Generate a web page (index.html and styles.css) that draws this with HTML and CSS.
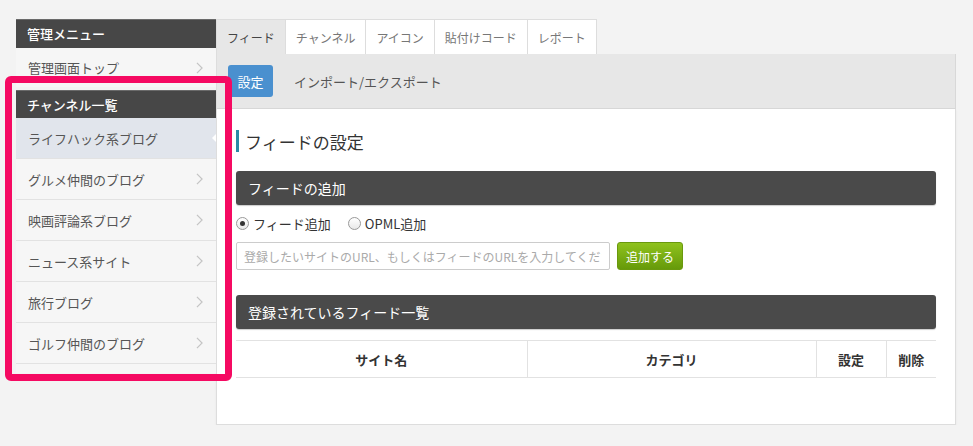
FILE: index.html
```html
<!DOCTYPE html>
<html lang="ja">
<head>
  <meta charset="UTF-8">
  <title>管理メニュー - フィードの設定</title>
  <link rel="stylesheet" href="styles.css">
</head>
<body>
  <div class="page">
    <aside class="sidebar">
      <div class="side-head">管理メニュー</div>
      <a href="#" class="side-item side-top">管理画面トップ
        <svg class="chev" viewBox="0 0 8 14"><path d="M1 1l6 6-6 6"/></svg>
      </a>

      <div class="side-head">チャンネル一覧</div>
      <a href="#" class="side-item active">ライフハック系ブログ</a>
      <a href="#" class="side-item">グルメ仲間のブログ
        <svg class="chev" viewBox="0 0 8 14"><path d="M1 1l6 6-6 6"/></svg>
      </a>
      <a href="#" class="side-item">映画評論系ブログ
        <svg class="chev" viewBox="0 0 8 14"><path d="M1 1l6 6-6 6"/></svg>
      </a>
      <a href="#" class="side-item">ニュース系サイト
        <svg class="chev" viewBox="0 0 8 14"><path d="M1 1l6 6-6 6"/></svg>
      </a>
      <a href="#" class="side-item">旅行ブログ
        <svg class="chev" viewBox="0 0 8 14"><path d="M1 1l6 6-6 6"/></svg>
      </a>
      <a href="#" class="side-item">ゴルフ仲間のブログ
        <svg class="chev" viewBox="0 0 8 14"><path d="M1 1l6 6-6 6"/></svg>
      </a>
      <div class="side-foot"></div>

      <!-- annotation frame drawn over the channel list -->
      <div class="highlight"></div>
    </aside>

    <main class="main">
      <nav class="tabs">
        <a href="#" class="tab active">フィード</a>
        <a href="#" class="tab">チャンネル</a>
        <a href="#" class="tab">アイコン</a>
        <a href="#" class="tab">貼付けコード</a>
        <a href="#" class="tab">レポート</a>
      </nav>

      <div class="subbar">
        <a href="#" class="sub-btn">設定</a>
        <a href="#" class="sub-link">インポート/エクスポート</a>
      </div>

      <section class="panel">
        <h2 class="title">フィードの設定</h2>

        <div class="bar">フィードの追加</div>
        <div class="radios">
          <label class="radio"><span class="dot checked"></span>フィード追加</label>
          <label class="radio"><span class="dot"></span>OPML追加</label>
        </div>
        <div class="add-row">
          <input class="url-input" type="text" placeholder="登録したいサイトのURL、もしくはフィードのURLを入力してください">
          <button class="btn-green">追加する</button>
        </div>

        <div class="bar">登録されているフィード一覧</div>
        <table class="feeds">
          <thead>
            <tr>
              <th class="col-name">サイト名</th>
              <th class="col-cat">カテゴリ</th>
              <th class="col-set">設定</th>
              <th class="col-del">削除</th>
            </tr>
          </thead>
        </table>
      </section>
    </main>
  </div>
</body>
</html>
```

FILE: styles.css
```css
* {
  margin: 0;
  padding: 0;
  box-sizing: border-box;
  font-family: "Noto Sans CJK JP", "Noto Sans", sans-serif;
}

body {
  background-color: #f3f3f3;
  color: #444;
}

a {
  text-decoration: none;
  color: inherit;
}

.page {
  display: flex;
  align-items: flex-start;
  padding: 19px 0 0 16px;
}

/* Sidebar */
.sidebar {
  position: relative;
  width: 200px;
  flex-shrink: 0;
}

.side-head {
  height: 28px;
  line-height: 27px;
  padding-left: 11px;
  background-color: #474747;
  border-top: 1px solid #6a6a6a;
  color: #fff;
  font-size: 13px;
  font-weight: 500;
}

.side-head:first-child {
  height: 29px;
}

.side-item {
  position: relative;
  display: flex;
  align-items: center;
  justify-content: space-between;
  height: 41px;
  padding: 0 13px 0 12px;
  background-color: #f6f6f6;
  border-bottom: 1px solid #e2e2e2;
  font-size: 13px;
  color: #555;
}

.side-top {
  height: 39px;
  margin-bottom: 3px;
  border-bottom: none;
}

.side-item.active {
  background-color: #e1e5ec;
}

.side-item.active::after {
  content: "";
  position: absolute;
  right: 0;
  top: 16px;
  border-style: solid;
  border-width: 4px 4px 4px 0;
  border-color: transparent #fff transparent transparent;
}

.chev {
  width: 7px;
  height: 12px;
  fill: none;
  stroke: #c4c4c4;
  stroke-width: 1.4;
}

.side-foot {
  height: 9px;
  background-color: #f6f6f6;
}

.highlight {
  position: absolute;
  left: -11px;
  top: 57px;
  width: 227px;
  height: 305px;
  border: 7px solid #f50a62;
  border-radius: 6px;
  pointer-events: none;
}

/* Main */
.main {
  width: 740px;
}

.tabs {
  display: flex;
  height: 35px;
}

.tab {
  display: flex;
  align-items: center;
  padding: 0 10px;
  background-color: #fff;
  border: 1px solid #ddd;
  border-bottom: none;
  border-left: none;
  font-size: 12px;
  color: #777;
}

.tab:first-child {
  border-left: 1px solid #ddd;
}

.tab.active {
  background-color: #e7e7e7;
  color: #444;
}

.subbar {
  display: flex;
  align-items: center;
  gap: 21px;
  height: 55px;
  padding: 0 11px;
  background-color: #e7e7e7;
  border: 1px solid #d8d8d8;
  border-top: none;
  border-left: 1px solid #ddd;
}

.sub-btn {
  display: inline-flex;
  align-items: center;
  justify-content: center;
  width: 45px;
  height: 32px;
  background-color: #4a90cf;
  border-radius: 3px;
  color: #fff;
  font-size: 13px;
}

.sub-link {
  font-size: 13px;
  color: #555;
}

.panel {
  height: 316px;
  padding: 20px 19px;
  background-color: #fff;
  border: 1px solid #ddd;
  border-top: none;
  box-shadow: 0 1px 2px rgba(0, 0, 0, 0.06);
}

.title {
  display: flex;
  align-items: center;
  height: 22px;
  margin-top: 1px;
  padding-left: 6px;
  border-left: 3px solid #2b8aa6;
  font-size: 17px;
  font-weight: 400;
  color: #333;
  line-height: 1;
}

.bar {
  height: 34px;
  line-height: 34px;
  margin-top: 19px;
  padding-left: 12px;
  background-color: #4a4a4a;
  border-radius: 3px;
  box-shadow: 0 1px 1px rgba(0, 0, 0, 0.2);
  color: #fff;
  font-size: 14px;
}

.radios {
  display: flex;
  gap: 17px;
  height: 37px;
  align-items: center;
  font-size: 13px;
  color: #333;
}

.radio {
  display: inline-flex;
  align-items: center;
  gap: 4px;
}

.dot {
  position: relative;
  width: 13px;
  height: 13px;
  border: 1px solid #999;
  border-radius: 50%;
  background: linear-gradient(#fff, #e8e8e8);
}

.dot.checked::after {
  content: "";
  position: absolute;
  left: 3px;
  top: 3px;
  width: 5px;
  height: 5px;
  border-radius: 50%;
  background-color: #333;
}

.add-row {
  display: flex;
  gap: 7px;
}

.url-input {
  width: 374px;
  height: 28px;
  padding: 0 7px;
  border: 1px solid #ccc;
  border-radius: 2px;
  font-size: 12px;
  color: #333;
}

.url-input::placeholder {
  color: #aaa;
}

.btn-green {
  width: 66px;
  height: 28px;
  border: 1px solid #6a990e;
  border-radius: 3px;
  background: linear-gradient(#8fc21d, #669a0a);
  color: #fff;
  font-size: 12px;
}

.add-row + .bar {
  margin-top: 25px;
}

.feeds {
  width: 100%;
  margin-top: 11px;
  border-collapse: collapse;
}

.feeds th {
  height: 37px;
  border-top: 1px solid #e2e2e2;
  border-bottom: 1px solid #e2e2e2;
  font-size: 13px;
  font-weight: 700;
  color: #333;
}

.feeds th + th {
  border-left: 1px solid #e2e2e2;
}

.col-name { width: 291px; }
.col-cat { width: 289px; }
.col-set { width: 70px; }
.col-del { width: 50px; }
```
